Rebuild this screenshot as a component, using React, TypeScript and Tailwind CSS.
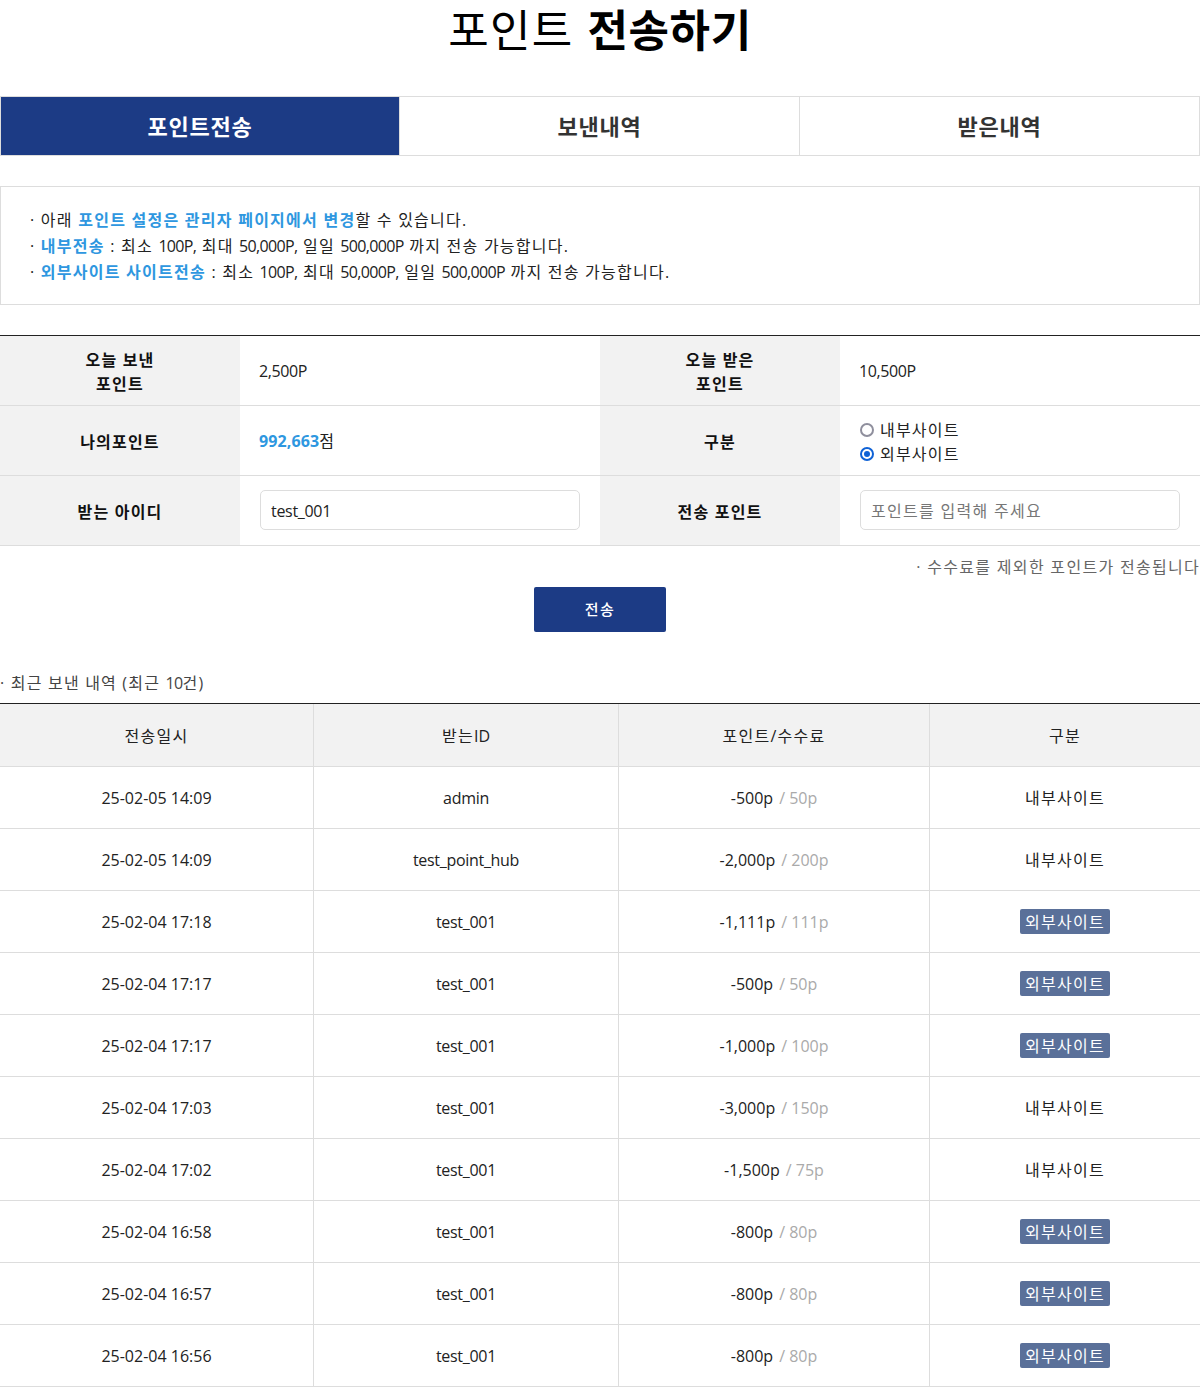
import React from 'react';

const rows = [
  { date: '25-02-05 14:09', id: 'admin', point: '-500p', fee: '50p', ext: false },
  { date: '25-02-05 14:09', id: 'test_point_hub', point: '-2,000p', fee: '200p', ext: false },
  { date: '25-02-04 17:18', id: 'test_001', point: '-1,111p', fee: '111p', ext: true },
  { date: '25-02-04 17:17', id: 'test_001', point: '-500p', fee: '50p', ext: true },
  { date: '25-02-04 17:17', id: 'test_001', point: '-1,000p', fee: '100p', ext: true },
  { date: '25-02-04 17:03', id: 'test_001', point: '-3,000p', fee: '150p', ext: false },
  { date: '25-02-04 17:02', id: 'test_001', point: '-1,500p', fee: '75p', ext: false },
  { date: '25-02-04 16:58', id: 'test_001', point: '-800p', fee: '80p', ext: true },
  { date: '25-02-04 16:57', id: 'test_001', point: '-800p', fee: '80p', ext: true },
  { date: '25-02-04 16:56', id: 'test_001', point: '-800p', fee: '80p', ext: true },
];

const Ko = ({ children }: { children: React.ReactNode }) => (
  <span className="tracking-[1.25px]">{children}</span>
);

// latin runs in the notice are narrow
const Num = ({ children }: { children: React.ReactNode }) => (
  <span className="tracking-[-0.65px]">{children}</span>
);

const Th = ({ children }: { children: React.ReactNode }) => (
  <div className="bg-[#f2f2f2] flex items-center justify-center text-center pt-[2px] font-bold text-[16px] leading-[24px] text-[#111] border-b border-[#ddd] tracking-[1.2px]">
    <div>{children}</div>
  </div>
);

const Td = ({ children }: { children: React.ReactNode }) => (
  <div className="flex items-center px-5 text-[16px] text-[#222] border-b border-[#ddd]">{children}</div>
);

const Radio = ({ checked, label }: { checked?: boolean; label: string }) => (
  <div className="flex items-center h-6">
    {checked ? (
      <span className="w-[14px] h-[14px] rounded-full border-[2px] border-[#0f62d6] flex items-center justify-center">
        <span className="w-[6px] h-[6px] rounded-full bg-[#0f62d6]" />
      </span>
    ) : (
      <span className="w-[14px] h-[14px] rounded-full border-[2px] border-[#8f8f9d] bg-white" />
    )}
    <span className="ml-[6px] text-[16px] text-[#222] tracking-[1.2px]">{label}</span>
  </div>
);

const Cell = ({ children, last, head }: { children: React.ReactNode; last?: boolean; head?: boolean }) => (
  <div className={`flex items-center justify-center text-[16px] text-[#222] ${head ? 'pt-[2px]' : ''} ${last ? '' : 'border-r border-[#ddd]'}`}>
    {children}
  </div>
);

export default function App() {
  return (
    <div className="w-[1200px] h-[1395px] bg-white overflow-hidden font-['Open_Sans','Noto_Sans_CJK_KR',sans-serif]">
      {/* title */}
      <h1 className="h-[96px] pb-[40px] flex items-center justify-center text-[44px] leading-[56px] text-black font-normal">
        <span className="font-['Noto_Sans_CJK_KR',sans-serif] font-normal tracking-[1.2px] whitespace-pre">포인트 </span>
        <strong className="ml-[3px] font-['Noto_Sans_CJK_KR',sans-serif] font-bold tracking-[0.6px]">전송하기</strong>
      </h1>

      {/* tabs */}
      <div className="grid grid-cols-3 h-[60px] text-[22px] font-bold tracking-[0.8px]">
        <div className="bg-[#1c3b85] text-white border border-[#ddd] flex items-center justify-center">포인트전송</div>
        <div className="text-[#333] border-y border-r border-[#ddd] flex items-center justify-center">보낸내역</div>
        <div className="text-[#333] border-y border-r border-[#ddd] flex items-center justify-center">받은내역</div>
      </div>

      {/* notice */}
      <div className="mt-[30px] h-[119px] border border-[#ddd] pt-[20px] pl-[29px] text-[16px] leading-[26px] text-[#222]">
        <p>
          <Ko>· 아래 <b className="text-[#2e97e0]">포인트 설정은 관리자 페이지에서 변경</b>할 수 있습니다.</Ko>
        </p>
        <p>
          <Ko>· <b className="text-[#2e97e0]">내부전송</b> : 최소 </Ko><Num>100P,</Num>
          <Ko> 최대 </Ko><Num>50,000P,</Num>
          <Ko> 일일 </Ko><Num>500,000P</Num>
          <Ko> 까지 전송 가능합니다.</Ko>
        </p>
        <p>
          <Ko>· <b className="text-[#2e97e0]">외부사이트 사이트전송</b> : 최소 </Ko><Num>100P,</Num>
          <Ko> 최대 </Ko><Num>50,000P,</Num>
          <Ko> 일일 </Ko><Num>500,000P</Num>
          <Ko> 까지 전송 가능합니다.</Ko>
        </p>
      </div>

      {/* form */}
      <div className="mt-[30px] border-t border-[#222] grid grid-cols-[240px_360px_240px_360px] auto-rows-[70px]">
        <Th>오늘 보낸<br />포인트</Th>
        <Td><span className="-ml-px tracking-[-0.4px]">2,500P</span></Td>
        <Th>오늘 받은<br />포인트</Th>
        <Td><span className="-ml-px tracking-[-0.4px]">10,500P</span></Td>
        <Th>나의포인트</Th>
        <Td><b className="-ml-px text-[#2e97e0] tracking-[0.1px]">992,663</b><Ko>점</Ko></Td>
        <Th>구분</Th>
        <Td>
          <div className="flex flex-col mt-[2px]">
            <Radio label="내부사이트" />
            <Radio checked label="외부사이트" />
          </div>
        </Td>
        <Th>받는 아이디</Th>
        <Td>
          <input
            readOnly
            value="test_001"
            className="w-full h-10 mb-[2px] px-[10px] pt-[2px] border border-[#ddd] rounded-[5px] text-[16px] text-[#222] tracking-[-0.3px] outline-none"
          />
        </Td>
        <Th>전송 포인트</Th>
        <Td>
          <input
            readOnly
            placeholder="포인트를 입력해 주세요"
            className="w-full h-10 mb-[2px] px-[10px] pt-[2px] border border-[#ddd] rounded-[5px] text-[16px] tracking-[1.3px] outline-none placeholder:text-[#777]"
          />
        </Td>
      </div>

      <p className="mt-[9px] text-right text-[16px] leading-[24px] text-[#666] tracking-[1.3px]">· 수수료를 제외한 포인트가 전송됩니다</p>

      <div className="mt-[8px] flex justify-center">
        <button className="w-[132px] h-[45px] bg-[#1c3b85] rounded-[2px] text-white text-[15px] font-medium tracking-[1.5px]">전송</button>
      </div>

      <p className="mt-[39px] text-[16px] leading-[24px] text-[#444] tracking-[1.2px]">· 최근 보낸 내역 (최근 <Num>10</Num>건)</p>

      {/* history */}
      <div className="mt-[8px] border-t border-[#222]">
        <div className="grid grid-cols-[314px_305px_311px_270px] h-[63px] bg-[#f2f2f2] border-b border-[#ddd]">
          <Cell head><Ko>전송일시</Ko></Cell>
          <Cell head><Ko>받는</Ko>ID</Cell>
          <Cell head><Ko>포인트/수수료</Ko></Cell>
          <Cell head last><Ko>구분</Ko></Cell>
        </div>
        {rows.map((r, i) => (
          <div key={i} className="grid grid-cols-[314px_305px_311px_270px] h-[62px] border-b border-[#ddd]">
            <Cell>{r.date}</Cell>
            <Cell><span className="tracking-[-0.3px]">{r.id}</span></Cell>
            <Cell>
              {r.point}
              <span className="ml-[6px] text-[#aaa]">/ {r.fee}</span>
            </Cell>
            <Cell last>
              {r.ext ? (
                <span className="px-[5px] h-[25px] leading-[26px] bg-[#5a7099] rounded-[2px] text-white"><Ko>외부사이트</Ko></span>
              ) : (
                <Ko>내부사이트</Ko>
              )}
            </Cell>
          </div>
        ))}
      </div>
    </div>
  );
}
